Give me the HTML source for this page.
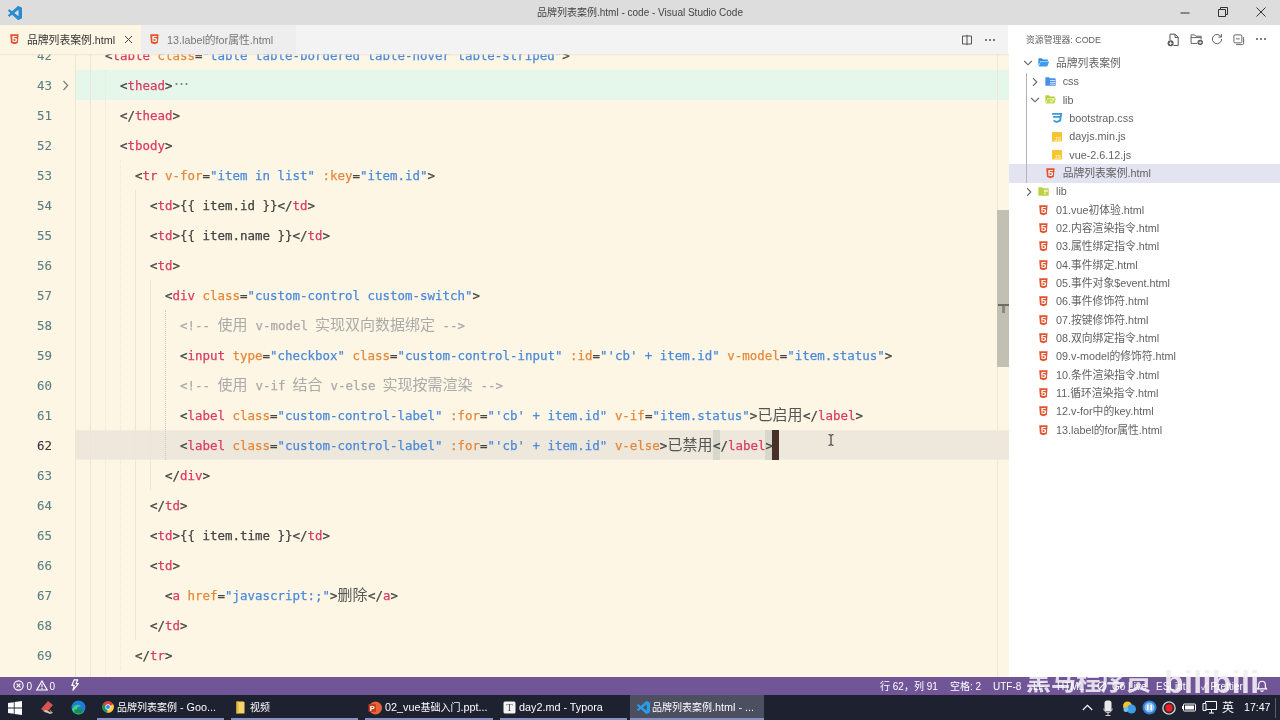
<!DOCTYPE html>
<html lang="zh-CN">
<head>
<meta charset="utf-8">
<title>品牌列表案例.html - code - Visual Studio Code</title>
<style>
*{box-sizing:border-box;margin:0;padding:0}
html,body{width:1280px;height:720px;overflow:hidden;background:#fff}
body{position:relative;will-change:transform;font-family:"Liberation Sans","Noto Sans CJK SC",sans-serif;color:#555}
.abs{position:absolute}
/* title bar */
#title{position:absolute;left:0;top:0;width:1280px;height:25px;background:#dddddd}
#title .tt{position:absolute;left:0;width:1280px;top:0;height:25px;line-height:25px;text-align:center;font-size:10px;color:#444}
/* tabs */
#tabs{position:absolute;left:0;top:25px;width:1008px;height:28.500px;background:#f3f3f3}
#tab1{position:absolute;left:0;top:0;width:141px;height:28.500px;background:#fdf6e4}
#tab2{position:absolute;left:141px;top:0;width:155px;height:28.500px;background:#eeeeee}
.tabt{position:absolute;top:0;height:29px;line-height:30px;font-size:10.8px;white-space:pre}
/* editor */
#editor{position:absolute;left:0;top:53.500px;width:1008.700px;height:623.500px;background:#fdf6e4;overflow:hidden}
.row{position:absolute;left:0;width:1009px;height:30px;line-height:30px;white-space:pre}
.ln{position:absolute;left:0;top:0.6px;width:52.600px;text-align:right;color:#5b7f83;font:12.6px/30px "DejaVu Sans Mono","Liberation Mono",monospace;transform:scaleX(.9887);transform-origin:0 50%;-webkit-text-stroke:0.1px}
.ln.cur{color:#3a3340}
.l{position:absolute;top:0.6px;font:12.6px/30px "DejaVu Sans Mono","Liberation Mono",monospace;transform:scaleX(.9887);transform-origin:0 50%;white-space:pre;color:#444;-webkit-text-stroke:0.25px}
.c{position:absolute;top:-1px;font:15px/30px "Noto Sans CJK SC",sans-serif;white-space:pre}
.g{position:absolute;width:0;display:block}
#ed2{position:absolute;left:0;top:0.500px;width:1009px;height:623px}
#fold{position:absolute;left:75px;top:16px;width:934px;height:30px;background:#e5f7ea}
#curline{position:absolute;left:75px;top:376px;width:934px;height:30px;background:#ede8db;border-top:1px solid #f1ecdf;border-bottom:1px solid #f1ecdf}
.bm{position:absolute;top:376px;height:30px;background:#d7d8cb}
#caret{position:absolute;left:772px;top:376px;width:7px;height:30px;background:#482f28}
#sbline{position:absolute;left:997px;top:0;width:1px;height:623px;background:#efe7d4}
#slider{position:absolute;left:997.200px;top:156px;width:11.500px;height:157px;background:#c2bfb3}
#shadow{position:absolute;left:0;top:-1px;width:1009px;height:3px;background:linear-gradient(#e3dccb,rgba(253,246,228,0))}
/* sidebar */
#side{position:absolute;left:1008.700px;top:25px;width:271.300px;height:652px;background:#fff}
.sel{position:absolute;left:1008.500px;width:271.500px;background:#e3e4f2}
.ic{position:absolute;display:block;overflow:visible}
.tl{position:absolute;height:18.33px;line-height:19.6px;font-size:10.8px;color:#626262;white-space:pre}
/* status */
#status{position:absolute;left:0;top:676.5px;width:1280px;height:18.5px;background:#705697;color:#fff;font-size:10px}
#status span{position:absolute;top:0;line-height:20.5px;white-space:pre}
/* taskbar */
#task{position:absolute;left:0;top:695px;width:1280px;height:25px;background:#1d2130;color:#fff;font-size:10.8px}
#task .cj{font-size:10px}
#task .tx{position:absolute;top:0;line-height:25px;white-space:pre}
#task .bar{position:absolute;top:22.500px;height:2.500px;background:#8891c2}
</style>
</head>
<body>
<!-- ===== title bar ===== -->
<div id="title">
  <svg class="ic" style="left:8px;top:5.8px" width="14" height="14" viewBox="0 0 24 24"><path d="M23.15 2.587L18.21.21a1.494 1.494 0 0 0-1.705.29l-9.46 8.63-4.12-3.128a.999.999 0 0 0-1.276.057L.327 7.261A1 1 0 0 0 .326 8.74L3.899 12 .326 15.26a1 1 0 0 0 .001 1.479L1.65 17.94a.999.999 0 0 0 1.276.057l4.12-3.128 9.46 8.63a1.492 1.492 0 0 0 1.704.29l4.942-2.377A1.5 1.5 0 0 0 24 20.06V3.939a1.500 1.500 0 0 0-.85-1.352zm-5.146 14.861L10.826 12l7.178-5.448v10.896z" fill="#2a8ad0"/></svg>
  <div class="tt">品牌列表案例.html - code - Visual Studio Code</div>
  <svg class="ic" style="left:1180px;top:7.500px" width="10" height="10" viewBox="0 0 10 10"><path d="M0.5 5h9" stroke="#333" stroke-width="1" fill="none"/></svg>
  <svg class="ic" style="left:1217.500px;top:7px" width="10" height="10" viewBox="0 0 10 10"><path d="M0.5 2.5h7v7h-7zM2.5 2.5v-2h7v7h-2" stroke="#333" stroke-width="1" fill="none"/></svg>
  <svg class="ic" style="left:1255.500px;top:7px" width="10" height="10" viewBox="0 0 10 10"><path d="M0.5 0.5l9 9M9.5 0.5l-9 9" stroke="#333" stroke-width="1" fill="none"/></svg>
</div>
<!-- ===== tabs ===== -->
<div id="tabs">
  <div id="tab1"></div><div id="tab2"></div>
  <span class="tabt" style="left:27px;color:#333">品牌列表案例.html</span>
  <svg class="ic" style="left:123.5px;top:10px" width="9" height="9" viewBox="0 0 9 9"><path d="M1 1l7 7M8 1l-7 7" stroke="#444" stroke-width="1" fill="none"/></svg>
  <span class="tabt" style="left:167px;color:#777">13.label的for属性.html</span>
  <svg class="ic" style="left:961px;top:9px" width="12" height="12" viewBox="0 0 12 12"><path d="M1.5 2h9v8h-9zM6 0.8v10.4" stroke="#555" stroke-width="1" fill="none"/></svg>
  <svg class="ic" style="left:984px;top:13px" width="12" height="4" viewBox="0 0 12 4"><circle cx="2" cy="2" r="1" fill="#555"/><circle cx="6" cy="2" r="1" fill="#555"/><circle cx="10" cy="2" r="1" fill="#555"/></svg>
</div>
<svg class="ic" style="left:10.4px;top:34.4px" width="8.8" height="10.4" viewBox="0 0 8.8 10.4"><path d="M0.2 0.2h8.4l-0.75 8.7L4.4 10.2 0.95 8.9z" fill="#e2542f"/><text x="4.45" y="8.3" text-anchor="middle" font-family="Liberation Sans,sans-serif" font-weight="bold" font-size="8.6" fill="#fff" transform="translate(4.4 0) scale(1.18 1) translate(-4.4 0)">5</text></svg>
<svg class="ic" style="left:149.9px;top:34.4px" width="8.8" height="10.4" viewBox="0 0 8.8 10.4"><path d="M0.2 0.2h8.4l-0.75 8.7L4.4 10.2 0.95 8.9z" fill="#e2542f"/><text x="4.45" y="8.3" text-anchor="middle" font-family="Liberation Sans,sans-serif" font-weight="bold" font-size="8.6" fill="#fff" transform="translate(4.4 0) scale(1.18 1) translate(-4.4 0)">5</text></svg>
<!-- ===== editor ===== -->
<div id="editor"><div id="ed2">
  <div id="fold"></div>
  <div id="curline"></div>
  <div class="bm" style="left:712.5px;width:7.5px"></div>
  <div class="bm" style="left:765px;width:7.5px"></div>
  <i class="g" style="left:75px;top:-14px;height:660px;border-left:1px solid #eee6d3"></i><i class="g" style="left:90px;top:-14px;height:660px;border-left:1px solid #eee6d3"></i><i class="g" style="left:105px;top:16px;height:630px;border-left:1px dotted #eee6d3"></i><i class="g" style="left:120px;top:106px;height:510px;border-left:1px dotted #eee6d3"></i><i class="g" style="left:135px;top:136px;height:450px;border-left:1px solid #eee6d3"></i><i class="g" style="left:150px;top:226px;height:210px;border-left:1px solid #eee6d3"></i><i class="g" style="left:165px;top:256px;height:150px;border-left:1px dotted #d2cbb9"></i>
  <svg class="ic" style="left:61px;top:26px" width="9" height="11" viewBox="0 0 9 11"><path d="M2.5 1l4.2 4.5L2.5 10" fill="none" stroke="#777" stroke-width="1.1"/></svg>
<div class="row" style="top:-14px"><span class="ln">42</span><span class="l" style="left:75px">    <span style="color:#454545">&lt;</span><span style="color:#db3a64">table</span> <span style="color:#e4883c">class</span><span style="color:#454545">=</span><span style="color:#4a89dc">"table table-bordered table-hover table-striped"</span><span style="color:#454545">&gt;</span></span></div>
<div class="row" style="top:16px"><span class="ln">43</span><span class="l" style="left:75px">      <span style="color:#454545">&lt;</span><span style="color:#db3a64">thead</span><span style="color:#454545">&gt;</span></span><span class="c" style="left:174px;color:#808080">⋯</span></div>
<div class="row" style="top:46px"><span class="ln">51</span><span class="l" style="left:75px">      <span style="color:#454545">&lt;/</span><span style="color:#db3a64">thead</span><span style="color:#454545">&gt;</span></span></div>
<div class="row" style="top:76px"><span class="ln">52</span><span class="l" style="left:75px">      <span style="color:#454545">&lt;</span><span style="color:#db3a64">tbody</span><span style="color:#454545">&gt;</span></span></div>
<div class="row" style="top:106px"><span class="ln">53</span><span class="l" style="left:75px">        <span style="color:#454545">&lt;</span><span style="color:#db3a64">tr</span> <span style="color:#e4883c">v-for</span><span style="color:#454545">=</span><span style="color:#4a89dc">"item in list"</span> <span style="color:#e4883c">:key</span><span style="color:#454545">=</span><span style="color:#4a89dc">"item.id"</span><span style="color:#454545">&gt;</span></span></div>
<div class="row" style="top:136px"><span class="ln">54</span><span class="l" style="left:75px">          <span style="color:#454545">&lt;</span><span style="color:#db3a64">td</span><span style="color:#454545">&gt;</span><span style="color:#424242">{{ item.id }}</span><span style="color:#454545">&lt;/</span><span style="color:#db3a64">td</span><span style="color:#454545">&gt;</span></span></div>
<div class="row" style="top:166px"><span class="ln">55</span><span class="l" style="left:75px">          <span style="color:#454545">&lt;</span><span style="color:#db3a64">td</span><span style="color:#454545">&gt;</span><span style="color:#424242">{{ item.name }}</span><span style="color:#454545">&lt;/</span><span style="color:#db3a64">td</span><span style="color:#454545">&gt;</span></span></div>
<div class="row" style="top:196px"><span class="ln">56</span><span class="l" style="left:75px">          <span style="color:#454545">&lt;</span><span style="color:#db3a64">td</span><span style="color:#454545">&gt;</span></span></div>
<div class="row" style="top:226px"><span class="ln">57</span><span class="l" style="left:75px">            <span style="color:#454545">&lt;</span><span style="color:#db3a64">div</span> <span style="color:#e4883c">class</span><span style="color:#454545">=</span><span style="color:#4a89dc">"custom-control custom-switch"</span><span style="color:#454545">&gt;</span></span></div>
<div class="row" style="top:256px"><span class="ln">58</span><span class="l" style="left:75px">              <span style="color:#aaaaaa">&lt;!-- </span></span><span class="c" style="left:217.5px"><span style="color:#aaaaaa">使用</span></span><span class="l" style="left:247.5px"><span style="color:#aaaaaa"> v-model </span></span><span class="c" style="left:315px"><span style="color:#aaaaaa">实现双向数据绑定</span></span><span class="l" style="left:435px"><span style="color:#aaaaaa"> --&gt;</span></span></div>
<div class="row" style="top:286px"><span class="ln">59</span><span class="l" style="left:75px">              <span style="color:#454545">&lt;</span><span style="color:#db3a64">input</span> <span style="color:#e4883c">type</span><span style="color:#454545">=</span><span style="color:#4a89dc">"checkbox"</span> <span style="color:#e4883c">class</span><span style="color:#454545">=</span><span style="color:#4a89dc">"custom-control-input"</span> <span style="color:#e4883c">:id</span><span style="color:#454545">=</span><span style="color:#4a89dc">"'cb' + item.id"</span> <span style="color:#e4883c">v-model</span><span style="color:#454545">=</span><span style="color:#4a89dc">"item.status"</span><span style="color:#454545">&gt;</span></span></div>
<div class="row" style="top:316px"><span class="ln">60</span><span class="l" style="left:75px">              <span style="color:#aaaaaa">&lt;!-- </span></span><span class="c" style="left:217.5px"><span style="color:#aaaaaa">使用</span></span><span class="l" style="left:247.5px"><span style="color:#aaaaaa"> v-if </span></span><span class="c" style="left:292.5px"><span style="color:#aaaaaa">结合</span></span><span class="l" style="left:322.5px"><span style="color:#aaaaaa"> v-else </span></span><span class="c" style="left:382.5px"><span style="color:#aaaaaa">实现按需渲染</span></span><span class="l" style="left:472.5px"><span style="color:#aaaaaa"> --&gt;</span></span></div>
<div class="row" style="top:346px"><span class="ln">61</span><span class="l" style="left:75px">              <span style="color:#454545">&lt;</span><span style="color:#db3a64">label</span> <span style="color:#e4883c">class</span><span style="color:#454545">=</span><span style="color:#4a89dc">"custom-control-label"</span> <span style="color:#e4883c">:for</span><span style="color:#454545">=</span><span style="color:#4a89dc">"'cb' + item.id"</span> <span style="color:#e4883c">v-if</span><span style="color:#454545">=</span><span style="color:#4a89dc">"item.status"</span><span style="color:#454545">&gt;</span></span><span class="c" style="left:757.5px"><span style="color:#555555">已启用</span></span><span class="l" style="left:802.5px"><span style="color:#454545">&lt;/</span><span style="color:#db3a64">label</span><span style="color:#454545">&gt;</span></span></div>
<div class="row" style="top:376px"><span class="ln cur">62</span><span class="l" style="left:75px">              <span style="color:#454545">&lt;</span><span style="color:#db3a64">label</span> <span style="color:#e4883c">class</span><span style="color:#454545">=</span><span style="color:#4a89dc">"custom-control-label"</span> <span style="color:#e4883c">:for</span><span style="color:#454545">=</span><span style="color:#4a89dc">"'cb' + item.id"</span> <span style="color:#e4883c">v-else</span><span style="color:#454545">&gt;</span></span><span class="c" style="left:667.5px"><span style="color:#555555">已禁用</span></span><span class="l" style="left:712.5px"><span style="color:#454545">&lt;/</span><span style="color:#db3a64">label</span><span style="color:#454545">&gt;</span></span></div>
<div class="row" style="top:406px"><span class="ln">63</span><span class="l" style="left:75px">            <span style="color:#454545">&lt;/</span><span style="color:#db3a64">div</span><span style="color:#454545">&gt;</span></span></div>
<div class="row" style="top:436px"><span class="ln">64</span><span class="l" style="left:75px">          <span style="color:#454545">&lt;/</span><span style="color:#db3a64">td</span><span style="color:#454545">&gt;</span></span></div>
<div class="row" style="top:466px"><span class="ln">65</span><span class="l" style="left:75px">          <span style="color:#454545">&lt;</span><span style="color:#db3a64">td</span><span style="color:#454545">&gt;</span><span style="color:#424242">{{ item.time }}</span><span style="color:#454545">&lt;/</span><span style="color:#db3a64">td</span><span style="color:#454545">&gt;</span></span></div>
<div class="row" style="top:496px"><span class="ln">66</span><span class="l" style="left:75px">          <span style="color:#454545">&lt;</span><span style="color:#db3a64">td</span><span style="color:#454545">&gt;</span></span></div>
<div class="row" style="top:526px"><span class="ln">67</span><span class="l" style="left:75px">            <span style="color:#454545">&lt;</span><span style="color:#db3a64">a</span> <span style="color:#e4883c">href</span><span style="color:#454545">=</span><span style="color:#4a89dc">"javascript:;"</span><span style="color:#454545">&gt;</span></span><span class="c" style="left:337.5px"><span style="color:#555555">删除</span></span><span class="l" style="left:367.5px"><span style="color:#454545">&lt;/</span><span style="color:#db3a64">a</span><span style="color:#454545">&gt;</span></span></div>
<div class="row" style="top:556px"><span class="ln">68</span><span class="l" style="left:75px">          <span style="color:#454545">&lt;/</span><span style="color:#db3a64">td</span><span style="color:#454545">&gt;</span></span></div>
<div class="row" style="top:586px"><span class="ln">69</span><span class="l" style="left:75px">        <span style="color:#454545">&lt;/</span><span style="color:#db3a64">tr</span><span style="color:#454545">&gt;</span></span></div>
<div class="row" style="top:616px"><span class="ln">70</span><span class="l" style="left:75px">      <span style="color:#454545">&lt;/</span><span style="color:#db3a64">tbody</span><span style="color:#454545">&gt;</span></span></div>
  <div id="caret"></div>
  <div id="sbline"></div>
  <div id="slider"></div>
  <div class="abs" style="left:998px;top:250.200px;width:11px;height:1.400px;background:#6f6c63"></div>
  <div class="abs" style="left:1001.700px;top:251.500px;width:3.800px;height:7px;background:#8c897e"></div>
  <div id="shadow"></div>
  <!-- mouse I-beam -->
  <svg class="ic" style="left:827px;top:380px" width="8" height="12" viewBox="0 0 8 12"><path d="M1.5 0.8h2l0.5 0.5 0.5-0.5h2M4 1v10M1.5 11.2h2l0.5-0.5 0.5 0.5h2" fill="none" stroke="#222" stroke-width="1"/></svg>
</div></div>
<!-- ===== sidebar ===== -->
<div id="side"></div>
<span class="abs" style="left:1026px;top:32.500px;font-size:8.9px;line-height:14px;color:#616161;white-space:pre">资源管理器: CODE</span>
<!-- header icons -->
<svg class="ic" style="left:1167px;top:33px" width="13" height="14" viewBox="0 0 13 14"><path d="M3 7V1.2h5.2l3 3V12.5H6.5M8 1.2v3.2h3.2" fill="none" stroke="#555" stroke-width="1"/><circle cx="3.6" cy="10.3" r="3" fill="#555"/><path d="M3.6 8.6v3.4M1.9 10.3h3.4" stroke="#fff" stroke-width="0.9"/></svg>
<svg class="ic" style="left:1189.500px;top:34px" width="13.500" height="11.700" viewBox="0 0 15 13"><path d="M8 10.5H1.2V1h4l1.2 1.5h6V6M1.2 4h11.2" fill="none" stroke="#555" stroke-width="1"/><circle cx="11.3" cy="9.3" r="3" fill="#555"/><path d="M11.3 7.6v3.4M9.6 9.3h3.4" stroke="#fff" stroke-width="0.9"/></svg>
<svg class="ic" style="left:1211px;top:33px" width="12" height="12" viewBox="0 0 13 13"><path d="M10.9 4.2A5 5 0 1 0 11.5 6.5M11.3 1.2v3.3H8" fill="none" stroke="#555" stroke-width="1"/></svg>
<svg class="ic" style="left:1233.400px;top:33.500px" width="11.500" height="11.500" viewBox="0 0 13 13"><path d="M2.3 1h6.400a1.300 1.300 0 0 1 1.300 1.300v6.400a1.300 1.300 0 0 1-1.300 1.300H2.300A1.300 1.300 0 0 1 1 8.700V2.300A1.300 1.300 0 0 1 2.300 1zM3.300 5.500h4.400M3.500 12h7.200a1.300 1.300 0 0 0 1.300-1.300V3.500" fill="none" stroke="#555" stroke-width="1"/></svg>
<svg class="ic" style="left:1255px;top:37.300px" width="12" height="4" viewBox="0 0 12 4"><circle cx="2" cy="2" r="1" fill="#555"/><circle cx="6" cy="2" r="1" fill="#555"/><circle cx="10" cy="2" r="1" fill="#555"/></svg>
<svg class="ic" style="left:1023px;top:58.1667px" width="10" height="10" viewBox="0 0 10 10"><path d="M1.2 3l3.8 3.8L8.8 3" fill="none" stroke="#646464" stroke-width="1.1"/></svg>
<svg class="ic" style="left:1038.4px;top:58.2667px" width="11.4" height="9" viewBox="0 0 14 11"><path d="M0.5 1.2a0.8 0.8 0 0 1 .8-.8h3.4l1.2 1.3h5.4a0.8 0.8 0 0 1 .8.8v1.2H3.2L0.5 9.5z" fill="#2f8fe0"/><path d="M3.4 4.3h10.3l-2.3 6.2H0.9z" fill="#3f9bea"/></svg>
<span class="tl" style="left:1056px;top:54px">品牌列表案例</span>
<svg class="ic" style="left:1030.17px;top:76.5px" width="10" height="10" viewBox="0 0 10 10"><path d="M3 1.2l3.800 3.800L3 8.800" fill="none" stroke="#646464" stroke-width="1.1"/></svg>
<svg class="ic" style="left:1045.07px;top:76.6px" width="11" height="9.3" viewBox="0 0 13 11"><path d="M0.4 0.9a0.7 0.7 0 0 1 .7-.7h3.6l1.1 1.3h6.1a0.7 0.7 0 0 1 .7.7v7.6a0.7 0.7 0 0 1-.7.7H1.1a0.7 0.7 0 0 1-.7-.7z" fill="#4a8fe6"/><path d="M6 3.6h6v1.2H6zM6 5.8h6V7H6zM6 8h6v1.2H6z" fill="#cfe2fa"/></svg>
<span class="tl" style="left:1062.67px;top:72.3333px">css</span>
<svg class="ic" style="left:1029.67px;top:94.8333px" width="10" height="10" viewBox="0 0 10 10"><path d="M1.2 3l3.8 3.8L8.8 3" fill="none" stroke="#646464" stroke-width="1.1"/></svg>
<svg class="ic" style="left:1045.07px;top:94.9333px" width="11.4" height="9" viewBox="0 0 14 11"><path d="M0.5 1.2a0.8 0.8 0 0 1 .8-.8h3.4l1.2 1.3h5.4a0.8 0.8 0 0 1 .8.8v1.2H3.2L0.5 9.5z" fill="#b7cc3a"/><path d="M3.4 4.3h10.3l-2.3 6.2H0.9z" fill="#c6d94e"/><path d="M6 6h2v1H6zM8.6 5.2h2.6v1.4H8.6zM6.4 7.8h3v1h-3z" fill="#eef6c8"/></svg>
<span class="tl" style="left:1062.67px;top:90.6667px">lib</span>
<svg class="ic" style="left:1050.84px;top:112.167px" width="12" height="12" viewBox="0 0 12 12"><path d="M1.2 1h10l-1.2 8.3L5.6 11 2.4 9.6l0.2-1.9 3 1.2 2.6-1 0.3-2.1H1.9l0.3-1.9h6.7l0.2-1.2H1z" fill="#3c99dc"/></svg>
<span class="tl" style="left:1069.34px;top:109px">bootstrap.css</span>
<svg class="ic" style="left:1052.34px;top:132.1px" width="10" height="9.6" viewBox="0 0 10 9.6"><rect x="0" y="0" width="10" height="9.6" rx="0.6" fill="#f7c52f"/><text x="8.9" y="8.6" text-anchor="end" font-family="Liberation Sans,sans-serif" font-weight="bold" font-size="5.2" fill="#fdf0c0">JS</text></svg>
<span class="tl" style="left:1069.34px;top:127.333px">dayjs.min.js</span>
<svg class="ic" style="left:1052.34px;top:150.433px" width="10" height="9.6" viewBox="0 0 10 9.6"><rect x="0" y="0" width="10" height="9.6" rx="0.6" fill="#f7c52f"/><text x="8.9" y="8.6" text-anchor="end" font-family="Liberation Sans,sans-serif" font-weight="bold" font-size="5.2" fill="#fdf0c0">JS</text></svg>
<span class="tl" style="left:1069.34px;top:145.667px">vue-2.6.12.js</span>
<div class="sel" style="top:163.8px;height:18.7333px"></div>
<svg class="ic" style="left:1046.07px;top:168.067px" width="8.8" height="10.4" viewBox="0 0 8.8 10.4"><path d="M0.2 0.2h8.4l-0.75 8.7L4.4 10.2 0.95 8.9z" fill="#e2542f"/><text x="4.45" y="8.3" text-anchor="middle" font-family="Liberation Sans,sans-serif" font-weight="bold" font-size="8.6" fill="#fff" transform="translate(4.4 0) scale(1.18 1) translate(-4.4 0)">5</text></svg>
<span class="tl" style="left:1062.67px;top:164px">品牌列表案例.html</span>
<svg class="ic" style="left:1023.5px;top:186.5px" width="10" height="10" viewBox="0 0 10 10"><path d="M3 1.2l3.800 3.800L3 8.800" fill="none" stroke="#646464" stroke-width="1.1"/></svg>
<svg class="ic" style="left:1038.4px;top:186.6px" width="11" height="9.3" viewBox="0 0 13 11"><path d="M0.4 0.9a0.7 0.7 0 0 1 .7-.7h3.6l1.1 1.3h6.1a0.7 0.7 0 0 1 .7.7v7.6a0.7 0.7 0 0 1-.7.7H1.1a0.7 0.7 0 0 1-.7-.7z" fill="#bdd043"/><path d="M7 3.4h4.6v2.4H7zM7 6.6h2.2v2H7z" fill="#e6f2b0"/></svg>
<span class="tl" style="left:1056px;top:182.333px">lib</span>
<svg class="ic" style="left:1039.4px;top:204.733px" width="8.8" height="10.4" viewBox="0 0 8.8 10.4"><path d="M0.2 0.2h8.4l-0.75 8.7L4.4 10.2 0.95 8.9z" fill="#e2542f"/><text x="4.45" y="8.3" text-anchor="middle" font-family="Liberation Sans,sans-serif" font-weight="bold" font-size="8.6" fill="#fff" transform="translate(4.4 0) scale(1.18 1) translate(-4.4 0)">5</text></svg>
<span class="tl" style="left:1056px;top:200.667px">01.vue初体验.html</span>
<svg class="ic" style="left:1039.4px;top:223.067px" width="8.8" height="10.4" viewBox="0 0 8.8 10.4"><path d="M0.2 0.2h8.4l-0.75 8.7L4.4 10.2 0.95 8.9z" fill="#e2542f"/><text x="4.45" y="8.3" text-anchor="middle" font-family="Liberation Sans,sans-serif" font-weight="bold" font-size="8.6" fill="#fff" transform="translate(4.4 0) scale(1.18 1) translate(-4.4 0)">5</text></svg>
<span class="tl" style="left:1056px;top:219px">02.内容渲染指令.html</span>
<svg class="ic" style="left:1039.4px;top:241.4px" width="8.8" height="10.4" viewBox="0 0 8.8 10.4"><path d="M0.2 0.2h8.4l-0.75 8.7L4.4 10.2 0.95 8.9z" fill="#e2542f"/><text x="4.45" y="8.3" text-anchor="middle" font-family="Liberation Sans,sans-serif" font-weight="bold" font-size="8.6" fill="#fff" transform="translate(4.4 0) scale(1.18 1) translate(-4.4 0)">5</text></svg>
<span class="tl" style="left:1056px;top:237.333px">03.属性绑定指令.html</span>
<svg class="ic" style="left:1039.4px;top:259.733px" width="8.8" height="10.4" viewBox="0 0 8.8 10.4"><path d="M0.2 0.2h8.4l-0.75 8.7L4.4 10.2 0.95 8.9z" fill="#e2542f"/><text x="4.45" y="8.3" text-anchor="middle" font-family="Liberation Sans,sans-serif" font-weight="bold" font-size="8.6" fill="#fff" transform="translate(4.4 0) scale(1.18 1) translate(-4.4 0)">5</text></svg>
<span class="tl" style="left:1056px;top:255.667px">04.事件绑定.html</span>
<svg class="ic" style="left:1039.4px;top:278.067px" width="8.8" height="10.4" viewBox="0 0 8.8 10.4"><path d="M0.2 0.2h8.4l-0.75 8.7L4.4 10.2 0.95 8.9z" fill="#e2542f"/><text x="4.45" y="8.3" text-anchor="middle" font-family="Liberation Sans,sans-serif" font-weight="bold" font-size="8.6" fill="#fff" transform="translate(4.4 0) scale(1.18 1) translate(-4.4 0)">5</text></svg>
<span class="tl" style="left:1056px;top:274px">05.事件对象$event.html</span>
<svg class="ic" style="left:1039.4px;top:296.4px" width="8.8" height="10.4" viewBox="0 0 8.8 10.4"><path d="M0.2 0.2h8.4l-0.75 8.7L4.4 10.2 0.95 8.9z" fill="#e2542f"/><text x="4.45" y="8.3" text-anchor="middle" font-family="Liberation Sans,sans-serif" font-weight="bold" font-size="8.6" fill="#fff" transform="translate(4.4 0) scale(1.18 1) translate(-4.4 0)">5</text></svg>
<span class="tl" style="left:1056px;top:292.333px">06.事件修饰符.html</span>
<svg class="ic" style="left:1039.4px;top:314.733px" width="8.8" height="10.4" viewBox="0 0 8.8 10.4"><path d="M0.2 0.2h8.4l-0.75 8.7L4.4 10.2 0.95 8.9z" fill="#e2542f"/><text x="4.45" y="8.3" text-anchor="middle" font-family="Liberation Sans,sans-serif" font-weight="bold" font-size="8.6" fill="#fff" transform="translate(4.4 0) scale(1.18 1) translate(-4.4 0)">5</text></svg>
<span class="tl" style="left:1056px;top:310.667px">07.按键修饰符.html</span>
<svg class="ic" style="left:1039.4px;top:333.067px" width="8.8" height="10.4" viewBox="0 0 8.8 10.4"><path d="M0.2 0.2h8.4l-0.75 8.7L4.4 10.2 0.95 8.9z" fill="#e2542f"/><text x="4.45" y="8.3" text-anchor="middle" font-family="Liberation Sans,sans-serif" font-weight="bold" font-size="8.6" fill="#fff" transform="translate(4.4 0) scale(1.18 1) translate(-4.4 0)">5</text></svg>
<span class="tl" style="left:1056px;top:329px">08.双向绑定指令.html</span>
<svg class="ic" style="left:1039.4px;top:351.4px" width="8.8" height="10.4" viewBox="0 0 8.8 10.4"><path d="M0.2 0.2h8.4l-0.75 8.7L4.4 10.2 0.95 8.9z" fill="#e2542f"/><text x="4.45" y="8.3" text-anchor="middle" font-family="Liberation Sans,sans-serif" font-weight="bold" font-size="8.6" fill="#fff" transform="translate(4.4 0) scale(1.18 1) translate(-4.4 0)">5</text></svg>
<span class="tl" style="left:1056px;top:347.333px">09.v-model的修饰符.html</span>
<svg class="ic" style="left:1039.4px;top:369.733px" width="8.8" height="10.4" viewBox="0 0 8.8 10.4"><path d="M0.2 0.2h8.4l-0.75 8.7L4.4 10.2 0.95 8.9z" fill="#e2542f"/><text x="4.45" y="8.3" text-anchor="middle" font-family="Liberation Sans,sans-serif" font-weight="bold" font-size="8.6" fill="#fff" transform="translate(4.4 0) scale(1.18 1) translate(-4.4 0)">5</text></svg>
<span class="tl" style="left:1056px;top:365.667px">10.条件渲染指令.html</span>
<svg class="ic" style="left:1039.4px;top:388.067px" width="8.8" height="10.4" viewBox="0 0 8.8 10.4"><path d="M0.2 0.2h8.4l-0.75 8.7L4.4 10.2 0.95 8.9z" fill="#e2542f"/><text x="4.45" y="8.3" text-anchor="middle" font-family="Liberation Sans,sans-serif" font-weight="bold" font-size="8.6" fill="#fff" transform="translate(4.4 0) scale(1.18 1) translate(-4.4 0)">5</text></svg>
<span class="tl" style="left:1056px;top:384px">11.循环渲染指令.html</span>
<svg class="ic" style="left:1039.4px;top:406.4px" width="8.8" height="10.4" viewBox="0 0 8.8 10.4"><path d="M0.2 0.2h8.4l-0.75 8.7L4.4 10.2 0.95 8.9z" fill="#e2542f"/><text x="4.45" y="8.3" text-anchor="middle" font-family="Liberation Sans,sans-serif" font-weight="bold" font-size="8.6" fill="#fff" transform="translate(4.4 0) scale(1.18 1) translate(-4.4 0)">5</text></svg>
<span class="tl" style="left:1056px;top:402.333px">12.v-for中的key.html</span>
<svg class="ic" style="left:1039.4px;top:424.733px" width="8.8" height="10.4" viewBox="0 0 8.8 10.4"><path d="M0.2 0.2h8.4l-0.75 8.7L4.4 10.2 0.95 8.9z" fill="#e2542f"/><text x="4.45" y="8.3" text-anchor="middle" font-family="Liberation Sans,sans-serif" font-weight="bold" font-size="8.6" fill="#fff" transform="translate(4.4 0) scale(1.18 1) translate(-4.4 0)">5</text></svg>
<span class="tl" style="left:1056px;top:420.667px">13.label的for属性.html</span>
<div class="abs" style="left:1026px;top:72.500px;width:1px;height:110px;background:#b4b4b8"></div>
<!-- ===== status bar ===== -->
<div id="status">
  <svg class="ic" style="left:13px;top:3.200px" width="11" height="11" viewBox="0 0 11 11"><circle cx="5.500" cy="5.500" r="4.600" fill="none" stroke="#fff" stroke-width="1.150"/><path d="M3.600 3.600l3.800 3.800M7.400 3.600l-3.800 3.800" stroke="#fff" stroke-width="1.150"/></svg>
  <span style="left:26.500px">0</span>
  <svg class="ic" style="left:35.500px;top:3.200px" width="12" height="11" viewBox="0 0 12 11"><path d="M6 1L11.200 10H0.800z" fill="none" stroke="#fff" stroke-width="1.150"/><path d="M6 4.200v3M6 8v1.200" stroke="#fff" stroke-width="1.150"/></svg>
  <span style="left:49.500px">0</span>
  <svg class="ic" style="left:69.500px;top:2.800px" width="10" height="12" viewBox="0 0 10 12"><path d="M4.200 0.800h3.600L6 4.600h2.400L3 11.200l1.200-4.800H1.800z" fill="none" stroke="#fff" stroke-width="1.150" stroke-linejoin="round"/></svg>
  <span style="left:880px">行 62，列 91</span>
  <span style="left:950px">空格: 2</span>
  <span style="left:993px">UTF-8</span>
  <span style="left:1033px">LF</span>
  <span style="left:1057px">HTML</span>
  <svg class="ic" style="left:1097px;top:4.500px" width="10" height="10" viewBox="0 0 10 10"><circle cx="5" cy="5" r="4" fill="none" stroke="#fff" stroke-width="1.150"/><path d="M2.200 7.800l5.600-5.600" stroke="#fff" stroke-width="1.150"/></svg>
  <span style="left:1112px">Go Live</span>
  <span style="left:1156px">ESLint</span>
  <span style="left:1201px">✓ Prettier</span>
  <svg class="ic" style="left:1256px;top:3.500px" width="12" height="12" viewBox="0 0 12 12"><path d="M6 1.200a3.300 3.300 0 0 1 3.300 3.300v2.600l1.200 1.700H1.500l1.200-1.700V4.500A3.300 3.300 0 0 1 6 1.200zM4.800 10.200a1.200 1.200 0 0 0 2.400 0" fill="none" stroke="#fff" stroke-width="1.150"/></svg>
</div>
<!-- ===== taskbar ===== -->
<div id="task">
  <svg class="ic" style="left:8px;top:6px" width="14" height="14" viewBox="0 0 14 14"><path d="M0 2l5.800-0.800v5.400H0zM6.600 1.100L14 0v6.600H6.600zM0 7.400h5.800v5.400L0 12zM6.600 7.400H14V14l-7.400-1.100z" fill="#fff"/></svg>
  <svg class="ic" style="left:40px;top:5px" width="15" height="15" viewBox="0 0 15 15"><path d="M1 9L8 1l5 4-7 8z" fill="#d9534f"/><path d="M3 11l3-1 6 3-2 1z" fill="#c9c9c9"/><path d="M9 9l4 4-1.500 0.500z" fill="#e8c15a"/></svg>
  <svg class="ic" style="left:71px;top:5px" width="15" height="15" viewBox="0 0 15 15"><circle cx="7.500" cy="7.500" r="7" fill="#1d7fd1"/><path d="M1 9a6.500 6.500 0 0 0 12 2c-3 2-7 1-7-2 0-2 2-3 4-2.500C9 4 4 3.500 1 9z" fill="#3fd08a"/><rect x="3.500" y="9.500" width="8" height="4" rx="0.800" fill="#1b8a4b"/></svg>
  <svg class="ic" style="left:101.500px;top:6.300px" width="12" height="12" viewBox="0 0 14 14"><circle cx="7" cy="7" r="6.800" fill="#db4437"/><path d="M7 7L1.100 3.600A6.800 6.800 0 0 0 6 13.730z" fill="#0f9d58"/><path d="M7 7L6 13.730A6.800 6.800 0 0 0 12.900 3.600z" fill="#ffcd40"/><path d="M7 7L12.900 3.600A6.800 6.800 0 0 0 1.100 3.600z" fill="#db4437"/><circle cx="7" cy="7" r="3.100" fill="#fff"/><circle cx="7" cy="7" r="2.400" fill="#4285f4"/></svg>
  <span class="tx" style="left:117px"><span class="cj">品牌列表案例</span> - Goo...</span>
  <svg class="ic" style="left:236px;top:6px" width="9" height="13" viewBox="0 0 9 13"><path d="M0.500 0.500h7l1 1V12.500H0.500z" fill="#f6d466"/><path d="M0.500 0.500h2v12h-2z" fill="#e2b93c"/></svg>
  <span class="tx" style="left:250px"><span class="cj">视频</span></span>
  <svg class="ic" style="left:368px;top:5.500px" width="14" height="14" viewBox="0 0 14 14"><circle cx="7.500" cy="7" r="6.500" fill="#e8633a"/><rect x="0.500" y="3" width="7.500" height="8" rx="1" fill="#c43e1c"/><text x="4.200" y="9.800" text-anchor="middle" font-family="Liberation Sans,sans-serif" font-weight="bold" font-size="7.500" fill="#fff">P</text></svg>
  <span class="tx" style="left:385px">02_vue<span class="cj">基础入门</span>.ppt...</span>
  <svg class="ic" style="left:503px;top:6px" width="13" height="13" viewBox="0 0 13 13"><rect x="0.500" y="0.500" width="12" height="12" rx="1.500" fill="#f2f2f2"/><text x="6.500" y="10.300" text-anchor="middle" font-family="Liberation Serif,serif" font-size="10.500" fill="#555">T</text></svg>
  <span class="tx" style="left:519px">day2.md - Typora</span>
  <div class="abs" style="left:630px;top:0;width:133.500px;height:25px;background:#4b4f5f"></div>
  <svg class="ic" style="left:637px;top:6px" width="13" height="13" viewBox="0 0 24 24"><path d="M23.15 2.587L18.21.21a1.494 1.494 0 0 0-1.705.29l-9.46 8.63-4.12-3.128a.999.999 0 0 0-1.276.057L.327 7.261A1 1 0 0 0 .326 8.74L3.899 12 .326 15.26a1 1 0 0 0 .001 1.479L1.65 17.94a.999.999 0 0 0 1.276.057l4.12-3.128 9.46 8.63a1.492 1.492 0 0 0 1.704.29l4.942-2.377A1.5 1.5 0 0 0 24 20.06V3.939a1.500 1.500 0 0 0-.85-1.352zm-5.146 14.861L10.826 12l7.178-5.448v10.896z" fill="#2b9be8"/></svg>
  <span class="tx" style="left:652px"><span class="cj">品牌列表案例</span>.html - ...</span>
  <div class="bar" style="left:97px;width:127px"></div>
  <div class="bar" style="left:231px;width:127px"></div>
  <div class="bar" style="left:365px;width:127.500px"></div>
  <div class="bar" style="left:499.500px;width:127px"></div>
  <div class="bar" style="left:630px;width:133.500px"></div>
  <!-- tray -->
  <svg class="ic" style="left:1082px;top:9px" width="11" height="7" viewBox="0 0 11 7"><path d="M0.800 6L5.500 1.300 10.200 6" fill="none" stroke="#fff" stroke-width="1.100"/></svg>
  <svg class="ic" style="left:1103px;top:4.500px" width="10" height="17" viewBox="0 0 10 17"><rect x="1.500" y="0.500" width="7" height="11" rx="2.500" fill="#e9e9e9"/><path d="M0.800 8.500a4.200 4.200 0 0 0 8.400 0M5 12.700v2.300M2.500 15.500h5" fill="none" stroke="#cfcfcf" stroke-width="1"/></svg>
  <svg class="ic" style="left:1122px;top:6px" width="15" height="13" viewBox="0 0 15 13"><circle cx="5.500" cy="5" r="4.500" fill="#f2c230"/><circle cx="9.500" cy="8" r="4.500" fill="#3d9be9"/><circle cx="4" cy="8.500" r="2.500" fill="#6fc0f5"/></svg>
  <svg class="ic" style="left:1142px;top:5px" width="15" height="15" viewBox="0 0 15 15"><circle cx="7.500" cy="7.500" r="7" fill="#2f7fd8"/><circle cx="7.500" cy="7.500" r="5" fill="#8ec2f2"/><path d="M5.800 4.800v5.400M9.200 4.800v5.400" stroke="#fff" stroke-width="1.600"/></svg>
  <svg class="ic" style="left:1162px;top:5.500px" width="14" height="14" viewBox="0 0 16 16"><circle cx="8" cy="8" r="7" fill="#2a2a2a" stroke="#cfcfcf" stroke-width="1.600"/><circle cx="8" cy="8" r="4.200" fill="#ee1c24"/></svg>
  <svg class="ic" style="left:1182px;top:8px" width="15" height="9" viewBox="0 0 15 9"><rect x="1.500" y="1" width="12" height="7" rx="0.800" fill="none" stroke="#fff" stroke-width="1"/><rect x="3" y="2.500" width="9" height="4" fill="#fff"/><path d="M0.500 3v3" stroke="#fff" stroke-width="1"/></svg>
  <svg class="ic" style="left:1202px;top:5px" width="16" height="15" viewBox="0 0 16 15"><path d="M3.500 1.500h11v8h-11zM7 13h5M9.500 9.500V13" fill="none" stroke="#fff" stroke-width="1"/><path d="M1 3.500h3v7H1z" fill="#1d2130" stroke="#fff" stroke-width="1"/></svg>
  <span class="tx" style="left:1222px;top:1px;font-size:12px">英</span>
  <span class="tx" style="left:1244px;font-size:10.600px">17:47</span><div class="abs" style="left:1275px;top:3px;width:1px;height:20px;background:#5a5f70"></div>
</div>
<!-- ===== watermark ===== -->
<div class="abs" style="left:1026px;top:662px;width:130px;height:33px;overflow:hidden;white-space:pre;font:bold 25px/34px 'Noto Sans CJK SC','WenQuanYi Zen Hei',sans-serif;color:rgba(255,255,255,.8)">黑马程序员</div>
<div class="abs" style="left:1163px;top:650px;width:100px;height:26.500px;overflow:hidden"><div style="position:absolute;left:1px;top:11.500px;white-space:pre;font:bold 32px/40px 'Liberation Sans',sans-serif;letter-spacing:.4px;color:#f0f0f0">bilibili</div></div>
<div class="abs" style="left:1163px;top:676.500px;width:100px;height:18.500px;overflow:hidden"><div style="position:absolute;left:1px;top:-15px;white-space:pre;font:bold 32px/40px 'Liberation Sans',sans-serif;letter-spacing:.4px;color:rgba(255,255,255,.82)">bilibili</div></div>
</body>
</html>
